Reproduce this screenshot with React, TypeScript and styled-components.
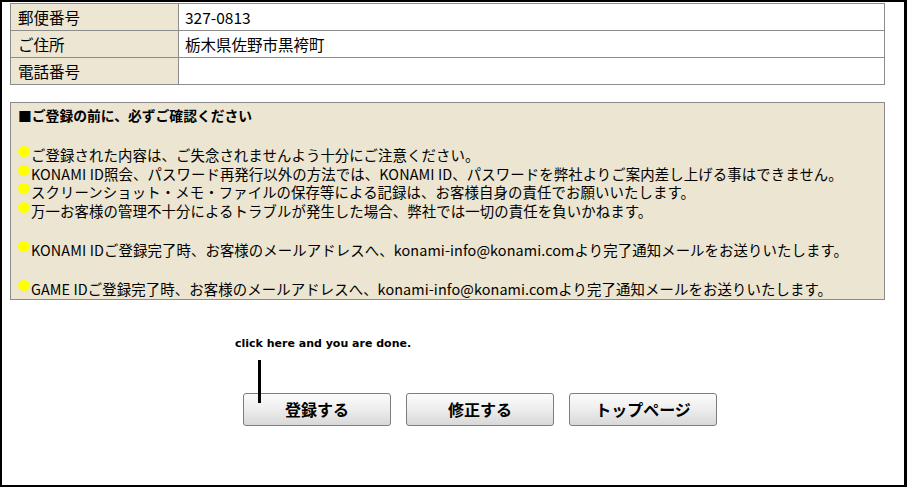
import React from "react";
import styled, { createGlobalStyle } from "styled-components";

const GlobalStyle = createGlobalStyle`
  html, body { margin: 0; padding: 0; background: #ffffff; }
  body { font-family: "Noto Sans CJK JP", sans-serif; color: #000; }
`;

const Frame = styled.div`
  box-sizing: border-box;
  width: 907px;
  height: 487px;
  border-left: 2px solid #000;
  border-top: 2px solid #000;
  border-right: 3px solid #000;
  border-bottom: 2px solid #000;
  padding: 1px 0 0 8px;
  background: #fff;
  overflow: hidden;
`;

const InfoTable = styled.table`
  width: 875px;
  border-collapse: collapse;
  font-family: "Noto Sans CJK JP", sans-serif;
  font-size: 15.5px;
`;

const LabelCell = styled.th`
  width: 168px;
  height: 26px;
  padding: 0 0 0 7px;
  box-sizing: border-box;
  background: #ece6d3;
  border: 1px solid #8c8c8c;
  text-align: left;
  font-weight: normal;
  line-height: 26px;
  white-space: nowrap;
`;

const ValueCell = styled.td`
  height: 26px;
  padding: 0 0 0 6px;
  border: 1px solid #8c8c8c;
  background: #fff;
  line-height: 26px;
  white-space: nowrap;
`;

const Notice = styled.div`
  box-sizing: border-box;
  width: 875px;
  height: 198px;
  margin-top: 17px;
  padding: 3px 0 0 7px;
  background: #ebe5d1;
  border: 1px solid #8c8c8c;
  font-size: 14.4px;
  line-height: 18.5px;
  letter-spacing: 0.1px;
  white-space: nowrap;
`;

const NoticeTitle = styled.div`
  font-weight: bold;
  font-size: 13.8px;
  line-height: 18.5px;
  letter-spacing: 0;
`;

const Group = styled.div<{ $gap: number }>`
  margin-top: ${(p) => p.$gap}px;
`;

const Line = styled.div`
  display: flex;
  align-items: flex-start;
  height: 18.5px;
`;

const Dot = styled.span`
  flex: none;
  width: 12px;
  height: 11px;
  margin: 0 1px 0 0;
  border-radius: 50%;
  background: radial-gradient(circle at 50% 50%, #ffff00 60%, #f4f060 100%);
`;

const ActionArea = styled.div`
  position: relative;
  padding-top: 37px;
`;

const Hint = styled.div`
  margin-left: 225px;
  font-family: "DejaVu Sans", sans-serif;
  font-weight: bold;
  font-size: 11px;
  line-height: 14px;
`;

const Pointer = styled.div`
  position: absolute;
  left: 248px;
  top: 60px;
  width: 3px;
  height: 43px;
  background: #000;
  z-index: 2;
`;

const ButtonRow = styled.div`
  display: flex;
  gap: 15px;
  margin: 42px 0 0 233px;
`;

const Button = styled.button`
  box-sizing: border-box;
  width: 148px;
  height: 33px;
  padding: 0;
  border: 1px solid #7d7d7d;
  border-radius: 3px;
  background: linear-gradient(#fbfbfb 0%, #efefef 45%, #d8d8d8 100%);
  font-family: "Noto Sans CJK JP", sans-serif;
  font-weight: bold;
  font-size: 16px;
  color: #000;
  line-height: 31px;
  cursor: pointer;
`;

const notices: { lines: string[] }[] = [
  {
    lines: [
      "ご登録された内容は、ご失念されませんよう十分にご注意ください。",
      "KONAMI ID照会、パスワード再発行以外の方法では、KONAMI ID、パスワードを弊社よりご案内差し上げる事はできません。",
      "スクリーンショット・メモ・ファイルの保存等による記録は、お客様自身の責任でお願いいたします。",
      "万一お客様の管理不十分によるトラブルが発生した場合、弊社では一切の責任を負いかねます。",
    ],
  },
  {
    lines: [
      "KONAMI IDご登録完了時、お客様のメールアドレスへ、konami-info@konami.comより完了通知メールをお送りいたします。",
    ],
  },
  {
    lines: [
      "GAME IDご登録完了時、お客様のメールアドレスへ、konami-info@konami.comより完了通知メールをお送りいたします。",
    ],
  },
];

const rows = [
  { label: "郵便番号", value: "327-0813" },
  { label: "ご住所", value: "栃木県佐野市黒袴町" },
  { label: "電話番号", value: "" },
];

export default function App() {
  return (
    <>
      <GlobalStyle />
      <Frame>
        <InfoTable>
          <tbody>
            {rows.map((r) => (
              <tr key={r.label}>
                <LabelCell>{r.label}</LabelCell>
                <ValueCell>{r.value}</ValueCell>
              </tr>
            ))}
          </tbody>
        </InfoTable>
        <Notice>
          <NoticeTitle>■ご登録の前に、必ずご確認ください</NoticeTitle>
          {notices.map((g, i) => (
            <Group key={i} $gap={i === 0 ? 21.5 : 20.5}>
              {g.lines.map((l) => (
                <Line key={l}>
                  <Dot />
                  <span>{l}</span>
                </Line>
              ))}
            </Group>
          ))}
        </Notice>
        <ActionArea>
          <Hint>click here and you are done.</Hint>
          <Pointer />
          <ButtonRow>
            <Button>登録する</Button>
            <Button>修正する</Button>
            <Button>トップページ</Button>
          </ButtonRow>
        </ActionArea>
      </Frame>
    </>
  );
}
